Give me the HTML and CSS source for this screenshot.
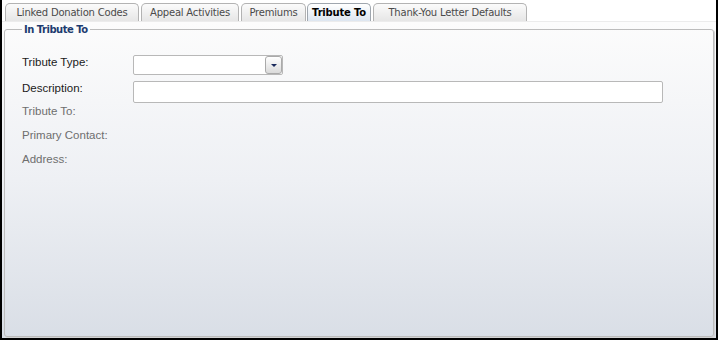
FILE: index.html
```html
<!DOCTYPE html>
<html lang="en">
<head>
  <meta charset="UTF-8" />
  <title>In Tribute To</title>
  <link rel="stylesheet" href="styles.css">
</head>
<body>
  <div class="window">
    <div class="tabs">
      <div class="tab tab-codes">Linked Donation Codes</div>
      <div class="tab tab-appeal">Appeal Activities</div>
      <div class="tab tab-premiums">Premiums</div>
      <div class="tab tab-tribute active">Tribute To</div>
      <div class="tab tab-letter">Thank-You Letter Defaults</div>
    </div>
    <div class="panel">
      <fieldset class="group">
        <legend>In Tribute To</legend>
        <div class="form">
          <div class="row field">
            <label class="lbl">Tribute Type:</label>
            <div class="combo"><span class="drop"></span></div>
          </div>
          <div class="row field desc">
            <label class="lbl">Description:</label>
            <div class="textbox"></div>
          </div>
          <div class="row text"><span class="lbl muted">Tribute To:</span></div>
          <div class="row text"><span class="lbl muted">Primary Contact:</span></div>
          <div class="row text"><span class="lbl muted">Address:</span></div>
        </div>
      </fieldset>
    </div>
  </div>
</body>
</html>
```

FILE: styles.css
```css
body {
  margin: 0;
  background: #ffffff;
  font-family: "Liberation Sans", Arial, sans-serif;
}
.window {
  width: 714px;
  height: 338px;
  border: 2px solid #000;
  border-top: none;
  display: flex;
  flex-direction: column;
  background: #fff;
}
.tabs {
  display: flex;
  align-items: flex-end;
  gap: 2px;
  height: 21px;
  padding-left: 3px;
}
.tab {
  box-sizing: border-box;
  height: 18px;
  line-height: 18px;
  text-align: center;
  border: 1px solid #b3b3b3;
  border-bottom: none;
  border-radius: 5px 5px 0 0;
  background: linear-gradient(#fbfbfb, #e6e6e6);
  color: #4a4a4a;
  font-family: "DejaVu Sans", sans-serif;
  font-size: 10px;
  letter-spacing: -0.2px;
  white-space: nowrap;
}
.tab-codes { width: 134px; }
.tab-appeal { width: 98px; }
.tab-premiums { width: 65px; }
.tab-tribute { width: 64px; margin-left: -1px; }
.tab-letter { width: 154px; }
.tab.active {
  background: linear-gradient(#ffffff, #dde6f0);
  border-color: #9fa6ae;
  color: #000;
  font-weight: bold;
}
.panel {
  flex: 1;
  display: flex;
  flex-direction: column;
  padding: 2px 2px 1px 2px;
  border-top: 1px solid #ececec;
  background: linear-gradient(#fcfcfc, #eef0f4 50%, #d9dee6);
}
.group {
  flex: 1;
  margin: 0;
  padding: 0 0 0 17px;
  border: 1px solid #bcbcbc;
  border-radius: 3px;
  box-shadow: 1px 1px 0 #d2d2d2;
  min-width: 0;
}
.group legend {
  margin-left: 0;
  padding: 0 2px;
  color: #1d3c70;
  font-family: "DejaVu Sans", sans-serif;
  font-size: 10px;
  font-weight: bold;
  letter-spacing: -0.5px;
}
.form {
  display: flex;
  flex-direction: column;
  padding-top: 20px;
}
.row {
  display: flex;
  align-items: flex-start;
}
.row.desc {
  margin-top: 6px;
}
.lbl {
  width: 111px;
  flex: none;
  font-size: 11.5px;
  line-height: 14px;
  color: #1a1a1a;
}
.lbl.muted {
  color: #6e6e6e;
  line-height: 16px;
}
.row.text + .row.text {
  margin-top: 8px;
}
.combo {
  width: 148px;
  height: 18px;
  border: 1px solid #b8b8b8;
  border-radius: 2px;
  background: #fff;
  display: flex;
  justify-content: flex-end;
}
.drop {
  width: 15px;
  height: 16px;
  border: 1px solid #aaaaaa;
  border-radius: 3px;
  background: linear-gradient(#ffffff, #dadada);
  display: flex;
  align-items: center;
  justify-content: center;
}
.drop::after {
  content: "";
  width: 0;
  height: 0;
  border-left: 3px solid transparent;
  border-right: 3px solid transparent;
  border-top: 3px solid #1a2a5c;
  margin-top: 1px;
}
.textbox {
  width: 528px;
  height: 20px;
  border: 1px solid #b8b8b8;
  border-radius: 2px;
  background: #fff;
}
```
